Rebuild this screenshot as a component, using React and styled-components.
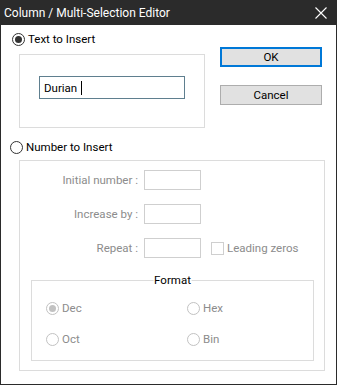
import React from "react";
import styled, { createGlobalStyle } from "styled-components";

const Global = createGlobalStyle`
  html, body { margin: 0; padding: 0; background: #fff; }
  body { font-family: Roboto, "Noto Sans", sans-serif; font-size: 11.5px; }
  * { box-sizing: border-box; }
`;

const Window = styled.div`
  width: 337px;
  height: 385px;
  display: flex;
  flex-direction: column;
  background: #2b2b2b;
  padding: 0 1px 1px 1px;
`;

const TitleBar = styled.div`
  height: 25px;
  display: flex;
  align-items: center;
  justify-content: space-between;
  color: #fff;
  padding: 0 9px 0 3px;
  font-size: 12px;
`;

const Body = styled.div`
  flex: 1;
  background: #fff;
  padding: 8px 0 0 0;
  display: flex;
  flex-direction: column;
`;

const TopArea = styled.div`
  display: flex;
`;

const LeftCol = styled.div`
  display: flex;
  flex-direction: column;
`;

const Spacer = styled.div`
  height: ${(p) => p.$h}px;
`;

const RadioRow = styled.label`
  display: flex;
  align-items: center;
  gap: 3px;
  height: 13px;
  margin-left: ${(p) => p.$indent || 0}px;
  color: ${(p) => (p.$disabled ? "#8c8c8c" : "#000")};
  font-size: 11.5px;
  line-height: 13px;
`;

const RadioCircle = styled.span`
  width: 13px;
  height: 13px;
  border-radius: 50%;
  border: 1px solid ${(p) => (p.$disabled ? "#c2c2c2" : "#333")};
  display: flex;
  align-items: center;
  justify-content: center;
  background: #fff;
  flex: none;
  &::after {
    content: "";
    display: ${(p) => (p.$checked ? "block" : "none")};
    width: 7px;
    height: 7px;
    border-radius: 50%;
    background: ${(p) => (p.$disabled ? "#c2c2c2" : "#333")};
  }
`;

const Group = styled.div`
  border: 1px solid #dcdcdc;
  margin-left: ${(p) => p.$left}px;
  width: ${(p) => p.$width}px;
  height: ${(p) => p.$height}px;
  margin-top: ${(p) => p.$top}px;
`;

const TextGroup = styled(Group)`
  padding: 21px 0 0 19px;
`;

const TextInput = styled.div`
  width: 146px;
  height: 23px;
  border: 1px solid #5f7f8f;
  display: flex;
  align-items: center;
  padding-left: 4px;
  font-size: 11.5px;
  color: #000;
`;

const Caret = styled.span`
  display: inline-block;
  width: 1px;
  height: 14px;
  background: #000;
  margin-left: 4px;
`;

const ButtonCol = styled.div`
  display: flex;
  flex-direction: column;
  gap: 18px;
  margin-left: 15px;
  margin-top: 14px;
`;

const Button = styled.div`
  width: 102px;
  height: 20px;
  background: #e1e1e1;
  border: ${(p) => (p.$default ? "2px solid #0078d7" : "1px solid #adadad")};
  display: flex;
  align-items: center;
  justify-content: center;
  font-size: 11.5px;
  color: #000;
`;

const NumGroup = styled(Group)`
  padding: 9px 0 0 0;
  display: flex;
  flex-direction: column;
`;

const FieldRow = styled.div`
  display: flex;
  align-items: center;
  height: 20px;
  margin-bottom: 14px;
`;

const FieldLabel = styled.span`
  width: 118px;
  text-align: right;
  color: #8c8c8c;
  font-size: 11.5px;
`;

const FieldBox = styled.div`
  width: 57px;
  height: 20px;
  border: 1px solid #cfcfcf;
  margin-left: 6px;
`;

const CheckRow = styled.div`
  display: flex;
  align-items: center;
  margin-left: 10px;
  color: #8c8c8c;
  font-size: 11.5px;
  gap: 3px;
`;

const CheckBox = styled.span`
  width: 13px;
  height: 13px;
  border: 1px solid #cfcfcf;
  display: block;
`;

const FormatGroup = styled.div`
  position: relative;
  margin: 8px 0 0 11px;
  width: 283px;
  height: 81px;
  border: 1px solid #dcdcdc;
  display: grid;
  grid-template-columns: 141px 1fr;
  grid-auto-rows: 13px;
  row-gap: 18px;
  padding: 21px 0 0 14px;
`;

const Legend = styled.span`
  position: absolute;
  top: -9px;
  left: 50%;
  transform: translateX(-50%);
  background: #fff;
  padding: 0 1px;
  font-size: 11.5px;
  color: #000;
  line-height: 16px;
`;

const CloseIcon = () => (
  <svg width="12" height="12" viewBox="0 0 12 12">
    <path d="M0.5 0.5 L11.5 11.5 M11.5 0.5 L0.5 11.5" stroke="#fff" strokeWidth="1.1" fill="none" />
  </svg>
);

const Radio = ({ label, checked, disabled, indent }) => (
  <RadioRow $disabled={disabled} $indent={indent}>
    <RadioCircle $checked={checked} $disabled={disabled} />
    {label}
  </RadioRow>
);

export default function App() {
  return (
    <>
      <Global />
      <Window>
        <TitleBar>
          <span>Column / Multi-Selection Editor</span>
          <CloseIcon />
        </TitleBar>
        <Body>
          <TopArea>
            <LeftCol>
              <Radio label="Text to Insert" checked indent={11} />
              <TextGroup $left={18} $width={186} $height={74} $top={8}>
                <TextInput>
                  Durian<Caret />
                </TextInput>
              </TextGroup>
            </LeftCol>
            <ButtonCol>
              <Button $default>OK</Button>
              <Button>Cancel</Button>
            </ButtonCol>
          </TopArea>
          <Spacer $h={13} />
          <Radio label="Number to Insert" indent={9} />
          <NumGroup $left={18} $width={306} $height={211} $top={6}>
            <FieldRow>
              <FieldLabel>Initial number :</FieldLabel>
              <FieldBox />
            </FieldRow>
            <FieldRow>
              <FieldLabel>Increase by :</FieldLabel>
              <FieldBox />
            </FieldRow>
            <FieldRow>
              <FieldLabel>Repeat :</FieldLabel>
              <FieldBox />
              <CheckRow>
                <CheckBox />
                Leading zeros
              </CheckRow>
            </FieldRow>
            <FormatGroup>
              <Legend>Format</Legend>
              <Radio label="Dec" checked disabled />
              <Radio label="Hex" disabled />
              <Radio label="Oct" disabled />
              <Radio label="Bin" disabled />
            </FormatGroup>
          </NumGroup>
        </Body>
      </Window>
    </>
  );
}
